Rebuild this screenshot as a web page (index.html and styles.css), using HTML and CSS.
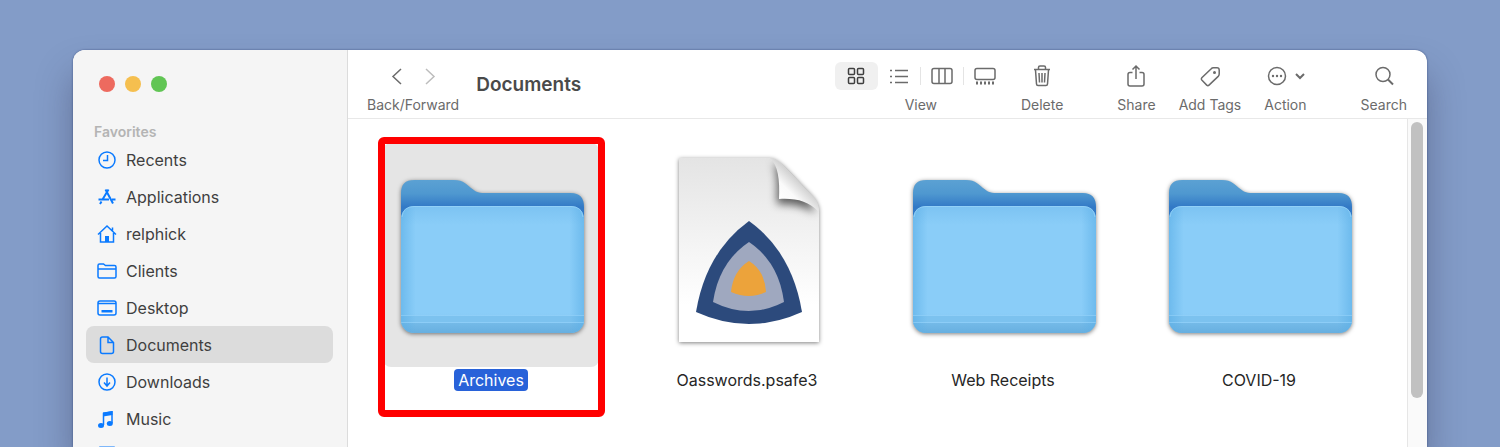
FILE: index.html
```html
<!DOCTYPE html>
<html lang="en">
<head>
  <meta charset="UTF-8" />
  <title>Documents</title>
  <link rel="stylesheet" href="styles.css">
</head>
<body>
  <!-- shared folder artwork -->
  <svg class="defs" width="0" height="0" aria-hidden="true">
    <defs>
      <linearGradient id="folderBack" x1="0" y1="0" x2="0" y2="1">
        <stop offset="0" stop-color="#5ba1d3" />
        <stop offset="0.1" stop-color="#4f98d0" />
        <stop offset="0.2" stop-color="#3279c6" />
        <stop offset="1" stop-color="#3279c6" />
      </linearGradient>
      <linearGradient id="folderFront" x1="0" y1="0" x2="0" y2="1">
        <stop offset="0" stop-color="#7cc3f2" />
        <stop offset="0.15" stop-color="#8acdf8" />
        <stop offset="0.84" stop-color="#8acdf8" />
        <stop offset="1" stop-color="#82c4f0" />
      </linearGradient>
      <linearGradient id="folderSides" x1="0" y1="0" x2="1" y2="0">
        <stop offset="0" stop-color="#5aaee6" stop-opacity="0.6" />
        <stop offset="0.08" stop-color="#5aaee6" stop-opacity="0" />
        <stop offset="0.92" stop-color="#5aaee6" stop-opacity="0" />
        <stop offset="1" stop-color="#5aaee6" stop-opacity="0.6" />
      </linearGradient>
      <linearGradient id="folderBase" x1="0" y1="0" x2="0" y2="1">
        <stop offset="0" stop-color="#74bae8" />
        <stop offset="1" stop-color="#66aedf" />
      </linearGradient>
      <clipPath id="folderClip"><rect x="10" y="51" width="183" height="127" rx="13" /></clipPath>
      <symbol id="folder" viewBox="0 0 200 200">
        <path fill="url(#folderBack)" d="M10 60V38Q10 25 23 25H63C73 25 76 30 80 33C84 36 86 38 94 38H180Q193 38 193 52V160H10z" />
        <rect x="10" y="51" width="183" height="127" rx="13" fill="url(#folderFront)" />
        <g clip-path="url(#folderClip)">
          <rect x="10" y="161" width="183" height="6" fill="#7cc2ef" />
          <rect x="10" y="168" width="183" height="11" fill="url(#folderBase)" />
          <rect x="10" y="51" width="183" height="127" fill="url(#folderSides)" />
          <path stroke="#93d1f8" stroke-opacity="0.6" d="M10 160.500H193M10 167.500H193" />
        </g>
        <path fill="none" stroke="#9bd6fa" stroke-opacity="0.7" d="M11 62Q12 51.500 23 51.500H180Q191 51.500 192 62" />
      </symbol>
    </defs>
  </svg>

  <div class="window">
    <aside class="sidebar">
      <div class="lights">
        <button class="light red" aria-label="Close"></button>
        <button class="light yellow" aria-label="Minimize"></button>
        <button class="light green" aria-label="Zoom"></button>
      </div>
      <h2>Favorites</h2>
      <nav>
        <a href="#"><svg class="side-icon" viewBox="0 0 20 20"><circle cx="10" cy="10" r="8" /><path d="M10.500 5v5.500H6" /></svg>Recents</a>
        <a href="#"><svg class="side-icon" viewBox="0 0 20 20"><path stroke-width="2" d="M8.500 2.500l7.500 14M11.500 2.500L5.800 12M1.500 12.500h10.500M15 12.500h3.500M4.500 14.500L3 17" /></svg>Applications</a>
        <a href="#"><svg class="side-icon" viewBox="0 0 20 20"><path d="M1 10.500L10 2l9 8.500M3.500 9v9h13V9M15.500 6.500V3.500" /><path class="solid" d="M8 12h4v6H8z" /></svg>relphick</a>
        <a href="#"><svg class="side-icon" viewBox="0 0 20 20"><path d="M1 15.500V4.500Q1 3 2.500 3H6.500L8.500 4.500H17.500Q19 4.500 19 6V15.500Q19 17 17.500 17H2.500Q1 17 1 15.500zM1 8H19" /></svg>Clients</a>
        <a href="#"><svg class="side-icon" viewBox="0 0 20 20"><rect x="1" y="3" width="18" height="14" rx="2" /><path d="M1 5.500h18" /><path class="solid" d="M4.500 12h11v2.500h-11z" /></svg>Desktop</a>
        <a href="#" class="active"><svg class="side-icon" viewBox="0 0 20 20"><path d="M11 2H5.500Q3.500 2 3.500 4V16.500Q3.500 18.500 5.500 18.500H14.500Q16.500 18.500 16.500 16.500V7.500zM11 2V7.500H16.500" /></svg>Documents</a>
        <a href="#"><svg class="side-icon" viewBox="0 0 20 20"><circle cx="10" cy="10" r="8" /><path d="M10 5.500v8M7 10.500l3 3.500 3-3.500" /></svg>Downloads</a>
        <a href="#"><svg class="side-icon" viewBox="0 0 20 20"><path d="M6.500 16V4.500L15 3v11" /><path class="solid" d="M6 3.500L15.500 2v4L6 7.500z" /><ellipse class="solid" cx="4" cy="16.500" rx="3" ry="2.500" /><ellipse class="solid" cx="12.800" cy="14.500" rx="3" ry="2.500" /></svg>Music</a>
        <a href="#" aria-label="Pictures"><svg class="side-icon faded" viewBox="0 0 20 20"><rect class="solid" x="2" y="0" width="16" height="18" rx="1" /></svg></a>
      </nav>
    </aside>

    <main>
      <header class="toolbar">
        <div class="tool">
          <div class="icons arrows">
            <button aria-label="Back"><svg class="icon" viewBox="0 0 24 24"><path d="M16 5l-8 7.500L16 20" /></svg></button>
            <button aria-label="Forward" disabled><svg class="icon" viewBox="0 0 24 24"><path d="M8 5l8 7.500L8 20" /></svg></button>
          </div>
          <span>Back/Forward</span>
        </div>
        <h1>Documents</h1>

        <div class="tool view">
          <div class="icons modes">
            <button class="mode selected" aria-label="Icons"><svg class="icon" viewBox="0 0 24 24"><rect x="4.500" y="4.500" width="6" height="6" rx="1" /><rect x="13.500" y="4.500" width="6" height="6" rx="1" /><rect x="4.500" y="13.500" width="6" height="6" rx="1" /><rect x="13.500" y="13.500" width="6" height="6" rx="1" /></svg></button>
            <button class="mode" aria-label="List"><svg class="icon" viewBox="0 0 24 24"><path d="M8 6.500h13M8 12.500h13M8 18.500h13M3 6.500h2M3 12.500h2M3 18.500h2" /></svg></button>
            <button class="mode divided" aria-label="Columns"><svg class="icon" viewBox="0 0 24 24"><rect x="2" y="4.500" width="20" height="15" rx="2" /><path d="M9 4.500v15M15 4.500v15" /></svg></button>
            <button class="mode divided" aria-label="Gallery"><svg class="icon" viewBox="0 0 24 24"><rect x="2" y="4.500" width="20" height="11" rx="2" /><path stroke-width="3" stroke-dasharray="2 2" d="M3 19h19" /></svg></button>
          </div>
          <span>View</span>
        </div>
        <button class="tool delete">
          <span class="icons"><svg class="icon" viewBox="0 0 24 24"><path d="M4 5.500h16M8.500 5V3.500Q8.500 2 10 2h4q1.500 0 1.500 1.500V5M5.500 6l1 14q.1 1.500 1.500 1.500h8q1.400 0 1.500-1.500l1-14M9 9l.5 9.500M12 9v9.500M15 9l-.5 9.500" /></svg></span>
          <span>Delete</span>
        </button>
        <button class="tool apart">
          <span class="icons"><svg class="icon" viewBox="0 0 24 24"><path d="M8.500 8.500H6q-2 0-2 2V20q0 2 2 2h12q2 0 2-2v-9.500q0-2-2-2h-2.500M12 15V2.500M8.500 5.500l3.500-3.500 3.500 3.500" /></svg></span>
          <span>Share</span>
        </button>
        <button class="tool">
          <span class="icons"><svg class="icon" viewBox="0 0 24 24"><path d="M13 5L3.800 13.800q-1 1.200 0 2.300l4.900 5q1.200 1 2.300 0L20.200 12.400q1-1 1-2.400V6q0-2.200-2.200-2.200h-3.500q-1.500 0-2.500 1.200z" /><circle class="dot" cx="16.500" cy="8.500" r="1.500" /></svg></span>
          <span>Add Tags</span>
        </button>
        <button class="tool">
          <span class="icons action"><svg class="icon" viewBox="0 0 24 24"><circle cx="12" cy="12" r="8.500" /><circle class="dot" cx="8" cy="12" r="1.200" /><circle class="dot" cx="12" cy="12" r="1.200" /><circle class="dot" cx="16" cy="12" r="1.200" /></svg><svg class="chevron" viewBox="0 0 12 12"><path d="M2 4l4 4 4-4" /></svg></span>
          <span>Action</span>
        </button>
        <button class="tool apart">
          <span class="icons"><svg class="icon" viewBox="0 0 24 24"><circle cx="11" cy="10.500" r="7" /><path stroke-width="2" d="M16 15.500l5 5" /></svg></span>
          <span>Search</span>
        </button>
      </header>

      <div class="content">
        <div class="files">
          <a href="#" class="file selected">
            <span class="thumb"><svg class="art" viewBox="0 0 200 200"><use href="#folder" /></svg></span>
            <span class="name">Archives</span>
            <span class="highlight"></span>
          </a>
          <a href="#" class="file">
            <span class="thumb">
              <svg class="art" viewBox="0 0 200 200">
                <defs>
                  <linearGradient id="paper" x1="0" y1="0" x2="0" y2="1">
                    <stop offset="0" stop-color="#e4e4e4" />
                    <stop offset="0.8" stop-color="#fff" />
                  </linearGradient>
                  <linearGradient id="curl" gradientUnits="userSpaceOnUse" x1="132" y1="44" x2="150" y2="26">
                    <stop offset="0" stop-color="#fff" />
                    <stop offset="0.5" stop-color="#fafafa" />
                    <stop offset="1" stop-color="#d4d4d4" />
                  </linearGradient>
                  <filter id="soft" x="-50%" y="-50%" width="200%" height="200%"><feGaussianBlur stdDeviation="4" /></filter>
                  <clipPath id="sheet"><path d="M32 3H123C131 4 136 10 142 16L161 36C168 43 172 48 172 57V187H32z" /></clipPath>
                </defs>
                <path fill="url(#paper)" d="M32 3H123C131 4 136 10 142 16L161 36C168 43 172 48 172 57V187H32z" />
                <g clip-path="url(#sheet)">
                  <path fill="#000" fill-opacity="0.6" filter="url(#soft)" d="M126 8C130 14 131 25 130 49C148 49 158 52 168 58L160 36L142 16z" />
                </g>
                <path fill="url(#curl)" d="M123 3C131 10 133 25 132 44C149 43 161 46 172 57C172 48 168 43 161 36L142 16C136 10 131 4 123 3z" />
                <path fill="#2c4a7c" d="M102 66Q145 97 155 157Q102 181 49 157Q59 97 102 66z" />
                <path fill="#9fa8bf" d="M102 87Q132 107 137 147Q102 165 66 147Q72 107 102 87z" />
                <path fill="#eca33b" d="M102 106Q118 116 119 137Q102 145 84 137Q86 116 102 106z" />
              </svg>
            </span>
            <span class="name">Oasswords.psafe3</span>
          </a>
          <a href="#" class="file">
            <span class="thumb"><svg class="art" viewBox="0 0 200 200"><use href="#folder" /></svg></span>
            <span class="name">Web Receipts</span>
          </a>
          <a href="#" class="file">
            <span class="thumb"><svg class="art" viewBox="0 0 200 200"><use href="#folder" /></svg></span>
            <span class="name">COVID-19</span>
          </a>
        </div>
        <div class="scrollbar"><div class="thumb-bar"></div></div>
      </div>
    </main>
  </div>
</body>
</html>
```

FILE: styles.css
```css
* { box-sizing: border-box; }
body {
  margin: 0;
  height: 100vh;
  padding: 50px 73px 0;
  overflow: hidden;
  background: #839cc8;
  font-family: Inter, "Liberation Sans", sans-serif;
  color: #262626;
}
a { color: inherit; text-decoration: none; }
button { border: 0; padding: 0; background: none; font: inherit; color: inherit; }
svg { display: block; fill: none; stroke: currentColor; }
.defs { position: absolute; }

.window {
  display: flex;
  height: 100%;
  border-radius: 12px 12px 0 0;
  background: #fff;
  box-shadow: 0 0 2px rgba(40, 60, 110, 0.8), 0 24px 36px rgba(50, 50, 80, 0.4);
}

/* sidebar */
.sidebar {
  width: 275px;
  flex-shrink: 0;
  padding: 26px 14px 0 13px;
  overflow: hidden;
  background: #f5f5f5;
  border-right: 1px solid #dcdcdc;
  border-radius: 12px 0 0 0;
}
.lights { display: flex; gap: 10px; padding-left: 13px; }
.light { width: 16px; height: 16px; border-radius: 50%; }
.red { background: #ed6a5f; }
.yellow { background: #f5bf4f; }
.green { background: #61c554; }
.sidebar h2 {
  margin: 30px 0 0;
  padding-left: 8px;
  font-size: 14px;
  line-height: 19px;
  font-weight: 600;
  color: #b4b4b4;
}
nav a {
  display: flex;
  align-items: center;
  gap: 9px;
  height: 37px;
  padding-left: 11px;
  border-radius: 8px;
  font-size: 16px;
  color: #3f3f3f;
}
nav .active { background: #dcdcdc; }
.side-icon { width: 20px; height: 20px; color: #0a7aff; stroke-width: 1.500; }
.side-icon .solid { fill: currentColor; stroke: none; }
.side-icon.faded { opacity: 0.5; }

/* toolbar */
main { flex: 1; min-width: 0; display: flex; flex-direction: column; }
.toolbar {
  display: flex;
  align-items: flex-start;
  gap: 23px;
  height: 69px;
  flex-shrink: 0;
  padding: 12px 20px 0 19px;
  border-bottom: 1px solid #e8e8e8;
}
.toolbar h1 {
  margin: 0 auto 0 -6px;
  padding-top: 11px;
  font-size: 19px;
  line-height: 24px;
  font-weight: 600;
  color: #4a4a4a;
}
.tool {
  display: flex;
  flex-direction: column;
  align-items: center;
  font-size: 14px;
  line-height: 18px;
  color: #6b6b6b;
}
.icons { display: flex; align-items: center; height: 28px; margin-bottom: 6px; }
.icon { width: 24px; height: 24px; stroke-width: 1.500; }
.dot { fill: currentColor; stroke: none; }
.arrows { gap: 9px; }
.arrows button:disabled { color: #bdbdbd; }
.mode {
  display: flex;
  align-items: center;
  justify-content: center;
  width: 43px;
  height: 28px;
  border-radius: 6px;
}
.mode.selected { background: #f0f0f0; color: #3f3f3f; }
.divided::before { content: ""; width: 1px; height: 18px; margin: 0 9px 0 -10px; background: #e4e4e4; }
.delete { margin-left: -9px; }
.apart { margin-left: 31px; }
.action { gap: 5px; }
.chevron { width: 12px; height: 12px; stroke-width: 2; }

/* files */
.content { flex: 1; min-height: 0; display: flex; }
.files {
  flex: 1;
  display: grid;
  grid-template-columns: repeat(4, 1fr);
  padding: 24px 20px 0 15px;
}
.file {
  position: relative;
  display: flex;
  flex-direction: column;
  align-items: center;
  gap: 2px;
}
.thumb {
  display: flex;
  align-items: center;
  justify-content: center;
  width: 216px;
  height: 224px;
  border-radius: 8px;
}
.art { width: 200px; height: 200px; stroke: none; filter: drop-shadow(0 1px 2px rgba(0, 0, 0, 0.5)); }
.name { padding: 0 4px; border-radius: 4px; font-size: 16px; line-height: 22px; }
.file.selected .thumb { background: #e5e5e5; }
.file.selected .name { background: #2862d9; color: #fff; }
.highlight {
  position: absolute;
  top: -6px;
  width: 227px;
  height: 280px;
  border: 7px solid #f00;
  border-radius: 6px;
}
.scrollbar { width: 20px; padding: 3px 4px 0 3px; background: #fafafa; border-left: 1px solid #e6e6e6; }
.thumb-bar { height: 85%; border-radius: 6px; background: #c1c1c1; }
```
